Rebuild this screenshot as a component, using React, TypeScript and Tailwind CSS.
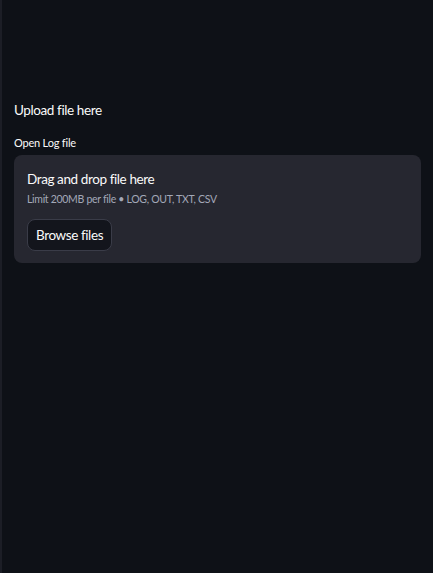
import React from 'react';

export default function App() {
  return (
    <div
      className="min-h-[573px] w-full bg-[#0e1117] text-[#fafafa] border-l-2 border-[#1c1e26]"
      style={{ fontFamily: 'Lato, "Noto Sans", sans-serif' }}
    >
      <div className="px-[12px] pt-[101px]">
        <p className="text-[13.5px] leading-[18px] tracking-[-0.4px]">Upload file here</p>

        <div className="mt-[17px]">
          <label className="block text-[11px] leading-[14px] tracking-[-0.2px] mb-[5px]">Open Log file</label>
          <div className="rounded-[8px] bg-[#262730] px-[13px] pt-[15px] pb-[12px]">
            <div className="text-[13.5px] leading-[18px] tracking-[-0.4px]">Drag and drop file here</div>
            <div className="mt-[4px] text-[10.5px] leading-[14px] tracking-[-0.3px] text-[#a3a8b8]">
              Limit 200MB per file • LOG, OUT, TXT, CSV
            </div>
            <button className="mt-[13px] rounded-[8px] border border-[#3a3c48] bg-[#13151c] px-[8px] h-[32px] text-[13.5px] leading-[18px] tracking-[-0.4px] text-[#fafafa]">
              Browse files
            </button>
          </div>
        </div>
      </div>
    </div>
  );
}
